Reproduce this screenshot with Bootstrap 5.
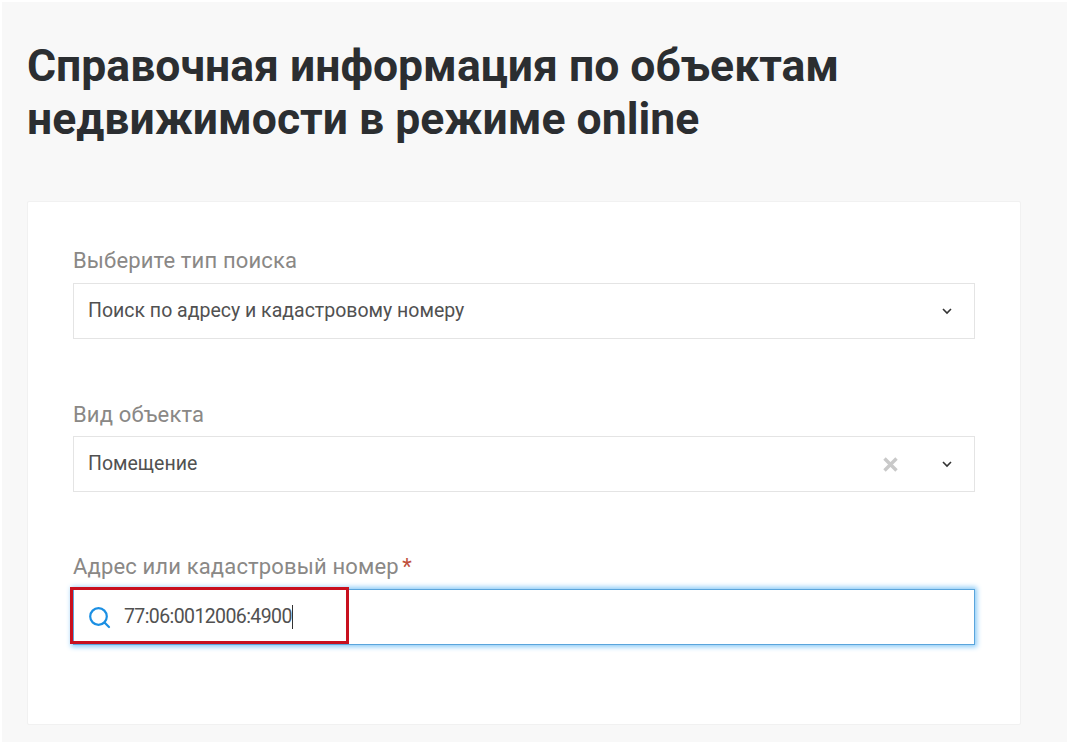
<!DOCTYPE html>
<html lang="ru">
<head>
<meta charset="utf-8">
<title>Справочная информация</title>
<link href="https://cdn.jsdelivr.net/npm/bootstrap@5.3.0/dist/css/bootstrap.min.css" rel="stylesheet">
<style>
html,body{height:100%;}
body{background:#fff;font-family:Roboto,sans-serif;overflow:hidden;}
.shell{margin:2px 0 2px 2px;height:740px;background:#f8f8f8;padding:38px 46px 17px 25px;display:flex;flex-direction:column;}
.ttl{font-family:Roboto,sans-serif;font-weight:700;font-size:44.5px;line-height:53px;color:#2b2e31;margin:0 0 55px;}
.sheet{flex:1;background:#fff;border:1px solid #f1f1f1;border-radius:2px;padding:44px 45px 0;}
.fld{margin-bottom:61px;position:relative;}
.fld-lbl{font-size:22px;line-height:29px;color:#8a8886;margin:0 0 8px;display:block;letter-spacing:.15px;}
.fld-lbl i{font-style:normal;color:#c0503c;margin-left:-2px;}
.fld-mid{margin-bottom:60px;}
.fld-mid .fld-lbl{margin-bottom:7px;}
.fld-box{height:56px;border:1px solid #e4e4e4;background:#fff;display:flex;align-items:center;padding:0 22px 0 14px;font-size:19.5px;color:#515151;}
.fld-box .val{flex:1;}
.fld-x{margin-right:44px;display:block;}
.fld-box.on{border-color:#5aa5dc;box-shadow:0 0 5px 2px #8ccbf7;padding-left:14px;}
.caret{display:inline-block;width:1px;height:24px;background:#333;}
.val-n{letter-spacing:-.6px;margin-left:13px;}
.redbox{position:absolute;left:-3px;top:-2px;width:279px;height:57px;border:3px solid #c8101e;pointer-events:none;}
.fld.last{margin-bottom:0;}
</style>
</head>
<body>
<div class="shell">
  <h1 class="ttl">Справочная информация по объектам<br>недвижимости в режиме online</h1>
  <div class="sheet">
    <div class="fld">
      <label class="fld-lbl">Выберите тип поиска</label>
      <div class="fld-box"><span class="val">Поиск по адресу и кадастровому номеру</span>
        <svg width="10" height="7" viewBox="0 0 10 7" fill="none" stroke="#333" stroke-width="1.6"><path d="M1 1l4 4 4-4"/></svg>
      </div>
    </div>
    <div class="fld fld-mid">
      <label class="fld-lbl">Вид объекта</label>
      <div class="fld-box"><span class="val">Помещение</span>
        <svg class="fld-x" width="15" height="15" viewBox="0 0 15 15" stroke="#c9c9c9" stroke-width="3.4" fill="none"><path d="M1.5 1.5l12 12M13.5 1.5l-12 12"/></svg>
        <svg width="10" height="7" viewBox="0 0 10 7" fill="none" stroke="#333" stroke-width="1.6"><path d="M1 1l4 4 4-4"/></svg>
      </div>
    </div>
    <div class="fld last">
      <label class="fld-lbl">Адрес или кадастровый номер <i>*</i></label>
      <div class="position-relative">
        <div class="fld-box on">
          <svg width="23" height="23" viewBox="0 0 23 23" fill="none" stroke="#1b8fe3" stroke-width="2.2"><circle cx="10.5" cy="10.5" r="8.3"/><path d="M16.5 16.5l4.5 4.5" stroke-linecap="round"/></svg>
          <span class="val-n">77:06:0012006:4900</span><span class="caret"></span>
        </div>
        <div class="redbox"></div>
      </div>
    </div>
  </div>
</div>
</body>
</html>
